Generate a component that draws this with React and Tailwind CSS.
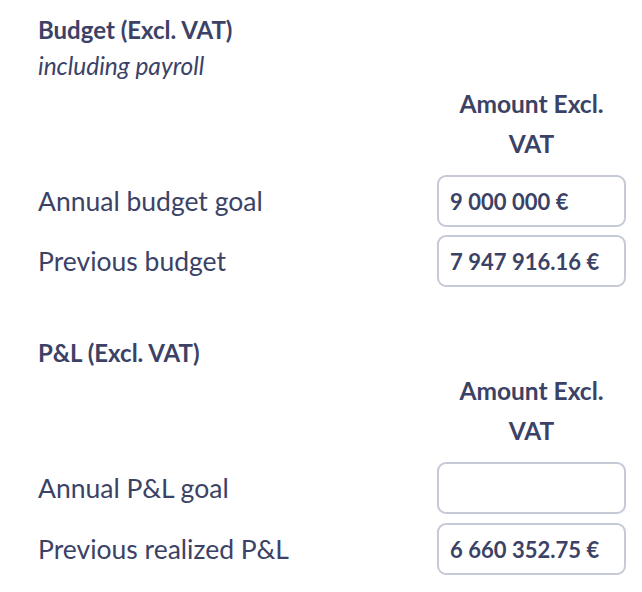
import React from "react";

const font = { fontFamily: "Lato, 'Noto Sans', sans-serif" };

function Row({ label, value }) {
  return (
    <div className="grid grid-cols-[1fr_189px] items-center">
      <div className="text-[26.5px] leading-[32px] text-[#3b4266]">{label}</div>
      <div className="h-[52px] rounded-[9px] border-2 border-[#c6c9d6] bg-white px-[11px] flex items-center">
        <span className="text-[22px] font-bold text-[#3b4266]">{value}</span>
      </div>
    </div>
  );
}

function Header() {
  return (
    <div className="grid grid-cols-[1fr_189px] mb-[11px]">
      <div />
      <div className="text-center text-[24.5px] leading-[40px] font-bold text-[#3b4266]">
        Amount Excl.
        <br />
        VAT
      </div>
    </div>
  );
}

export default function App() {
  return (
    <div className="w-[642px] h-[592px] bg-white pl-[38px] pr-[16px] pt-[12px]" style={font}>
      <div className="text-[24px] leading-[36px] font-bold text-[#3b4266]">Budget (Excl. VAT)</div>
      <div className="text-[24.5px] leading-[36px] italic text-[#3b4266]">including payroll</div>
      <Header />
      <div className="flex flex-col gap-[8px]">
        <Row label="Annual budget goal" value={"9\u202F000\u202F000 €"} />
        <Row label="Previous budget" value={"7\u202F947\u202F916.16 €"} />
      </div>
      <div className="mt-[48px] text-[24px] leading-[36px] font-bold text-[#3b4266]">P&amp;L (Excl. VAT)</div>
      <Header />
      <div className="flex flex-col gap-[9px]">
        <Row label="Annual P&L goal" value="" />
        <Row label="Previous realized P&L" value={"6\u202F660\u202F352.75 €"} />
      </div>
    </div>
  );
}
